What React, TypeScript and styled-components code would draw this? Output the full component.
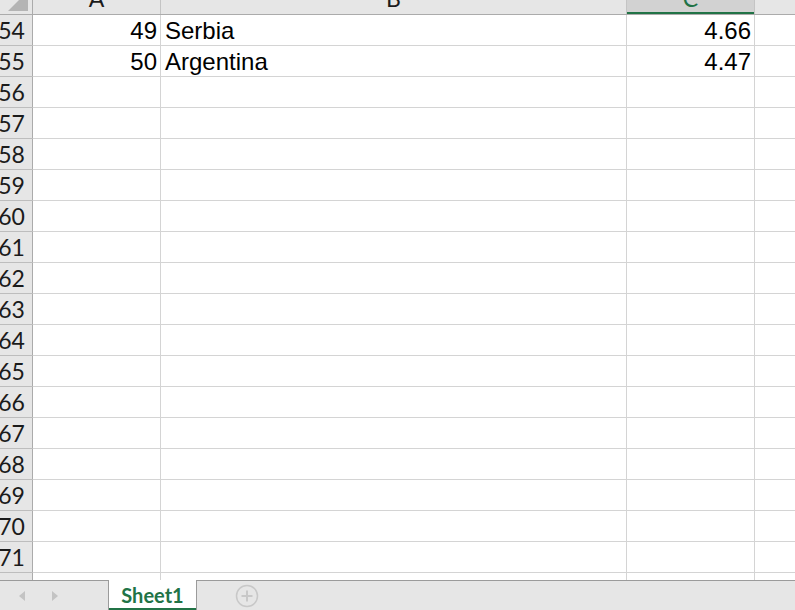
import styled, { createGlobalStyle } from 'styled-components';

const GlobalStyle = createGlobalStyle`
  html, body {
    margin: 0;
    padding: 0;
    background: #ffffff;
    overflow: hidden;
  }
`;

const GREEN = '#217346';
const GRID = '#d4d4d4';
const HEADER_BG = '#e6e6e6';
const HEADER_LINE = '#ababab';

const Workbook = styled.div`
  width: 795px;
  height: 610px;
  display: flex;
  flex-direction: column;
  overflow: hidden;
`;

const GridArea = styled.div`
  flex: 1;
  overflow: hidden;
  margin-top: -6px;
  margin-left: -10px;
`;

const Row = styled.div<{ $header?: boolean }>`
  display: flex;
  height: ${(p) => (p.$header ? 20 : 30)}px;
  border-bottom: 1px solid ${(p) => (p.$header ? HEADER_LINE : GRID)};
`;

const Corner = styled.div`
  position: relative;
  flex: 0 0 43px;
  box-sizing: border-box;
  background: ${HEADER_BG};
  border-right: 1px solid ${HEADER_LINE};
  overflow: hidden;
  &::after {
    content: '';
    position: absolute;
    right: 4px;
    bottom: 3px;
    width: 0;
    height: 0;
    border-left: 20px solid transparent;
    border-bottom: 20px solid #b4b4b4;
  }
`;

const RowHeader = styled.div`
  flex: 0 0 43px;
  box-sizing: border-box;
  display: flex;
  align-items: center;
  justify-content: center;
  background: ${HEADER_BG};
  border-right: 1px solid ${HEADER_LINE};
  box-shadow: 0 1px 0 #bdbdbd;
  font-family: Lato, 'Open Sans', sans-serif;
  font-size: 23px;
  color: #1b1b1b;
  padding-left: 1px;
`;

const ColHeader = styled.div<{ $w: number; $active?: boolean }>`
  flex: 0 0 ${(p) => p.$w}px;
  box-sizing: border-box;
  display: flex;
  align-items: flex-end;
  justify-content: center;
  background: ${(p) => (p.$active ? '#d2d2d2' : HEADER_BG)};
  border-right: 1px solid #c4c4c4;
  box-shadow: ${(p) => (p.$active ? `inset 0 -2px 0 ${GREEN}` : 'none')};
  font-family: Lato, 'Open Sans', sans-serif;
  font-size: 23px;
  line-height: 1;
  color: ${(p) => (p.$active ? GREEN : '#1b1b1b')};
  padding-bottom: 4px;
  overflow: hidden;
`;

const Cell = styled.div<{ $w: number; $num?: boolean }>`
  flex: 0 0 ${(p) => p.$w}px;
  box-sizing: border-box;
  display: flex;
  align-items: center;
  justify-content: ${(p) => (p.$num ? 'flex-end' : 'flex-start')};
  padding: ${(p) => (p.$num ? '2px 3px 0 0' : '2px 0 0 4px')};
  border-right: 1px solid ${GRID};
  font-family: 'Liberation Sans', Arial, sans-serif;
  font-size: 24px;
  color: #000;
  white-space: nowrap;
`;

const TabBar = styled.div`
  flex: 0 0 29px;
  display: flex;
  align-items: stretch;
  background: ${HEADER_BG};
  border-top: 1px solid #9b9b9b;
`;

const NavButtons = styled.div`
  display: flex;
  align-items: center;
  gap: 27px;
  padding-left: 19px;
  width: 89px;
`;

const Arrow = styled.span<{ $dir: 'left' | 'right' }>`
  width: 0;
  height: 0;
  border-top: 5px solid transparent;
  border-bottom: 5px solid transparent;
  ${(p) =>
    p.$dir === 'left'
      ? 'border-right: 6px solid #c3c3c3;'
      : 'border-left: 6px solid #c3c3c3;'}
`;

const SheetTab = styled.div`
  width: 87px;
  margin-top: -1px;
  display: flex;
  align-items: center;
  justify-content: center;
  background: #ffffff;
  border-left: 1px solid #9b9b9b;
  border-right: 1px solid #9b9b9b;
  box-shadow: inset 0 -2px 0 ${GREEN};
  font-family: Lato, 'Open Sans', sans-serif;
  font-weight: 700;
  font-size: 20px;
  color: ${GREEN};
  padding-bottom: 1px;
`;

const AddSheet = styled.div`
  display: flex;
  align-items: center;
  padding-left: 38px;
`;

const columns = [
  { key: 'A', w: 128 },
  { key: 'B', w: 466 },
  { key: 'C', w: 128, active: true },
  { key: 'D', w: 128 },
];

const data: Record<number, { a: string; b: string; c: string }> = {
  54: { a: '49', b: 'Serbia', c: '4.66' },
  55: { a: '50', b: 'Argentina', c: '4.47' },
};

const rows = Array.from({ length: 19 }, (_, i) => 54 + i);

export default function App() {
  return (
    <Workbook>
      <GlobalStyle />
      <GridArea>
        <Row $header>
          <Corner />
          {columns.map((c) => (
            <ColHeader key={c.key} $w={c.w} $active={c.active}>
              {c.key}
            </ColHeader>
          ))}
        </Row>
        {rows.map((r) => {
          const d = data[r];
          return (
            <Row key={r}>
              <RowHeader>{r}</RowHeader>
              <Cell $w={128} $num>
                {d?.a}
              </Cell>
              <Cell $w={466}>{d?.b}</Cell>
              <Cell $w={128} $num>
                {d?.c}
              </Cell>
              <Cell $w={128} />
            </Row>
          );
        })}
      </GridArea>
      <TabBar>
        <NavButtons>
          <Arrow $dir="left" />
          <Arrow $dir="right" />
        </NavButtons>
        <SheetTab>Sheet1</SheetTab>
        <AddSheet>
          <svg width="24" height="24" viewBox="0 0 24 24">
            <circle cx="12" cy="12" r="10.5" fill="none" stroke="#c8c8c8" strokeWidth="1.5" />
            <path d="M12 6.5v11M6.5 12h11" stroke="#c8c8c8" strokeWidth="2" />
          </svg>
        </AddSheet>
      </TabBar>
    </Workbook>
  );
}
